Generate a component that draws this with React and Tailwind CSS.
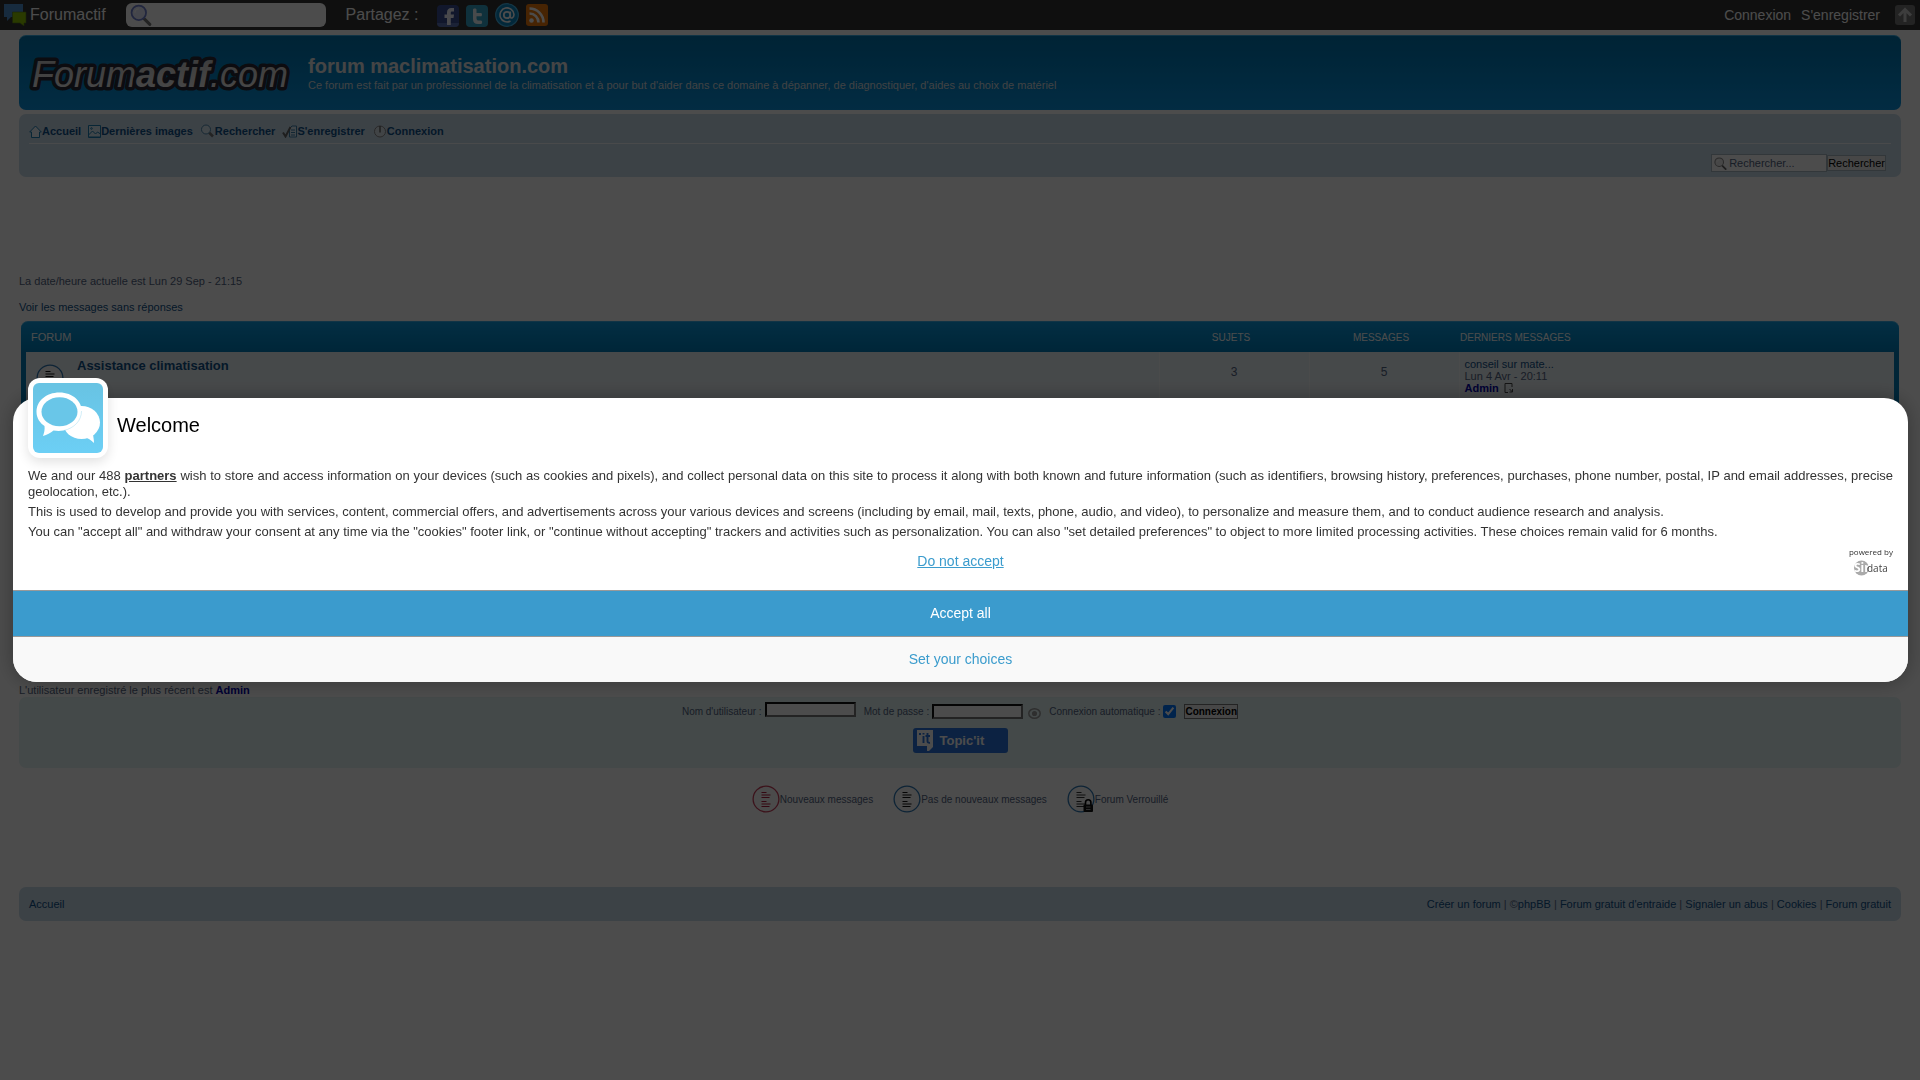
import React from "react";

function Bubbles() {
  return (
    <svg className="h-[22px] w-[23px]" viewBox="0 0 23 22" aria-hidden="true">
      <path d="M0 0h19v13H7l-4 4v-4H0z" fill="#4f8fd0" />
      <path d="M8.500 8H22v11h-2v3l-4-3H8.500z" fill="#8cc400" stroke="#54751a" strokeWidth=".6" />
    </svg>
  );
}

function Magnifier({ className, ring = "#6f7fd0", handle = "#777", fill = "#e8ecff" }) {
  return (
    <svg className={className} viewBox="0 0 20 20" aria-hidden="true">
      <path d="M13 13.500l5 5" stroke={handle} strokeWidth="2.800" strokeLinecap="round" />
      <circle cx="8" cy="8" r="6.600" fill={fill} stroke={ring} strokeWidth="1.600" />
      <path d="M4.500 8a3.500 3.500 0 0 1 3.500-3.500" stroke="#fff" strokeWidth="1.200" fill="none" />
    </svg>
  );
}

function Facebook() {
  return (
    <svg className="size-[22px]" viewBox="0 0 22 22" aria-hidden="true">
      <rect width="22" height="22" rx="4" fill="#3a4f94" />
      <path d="M0 18h22a4 4 0 0 1-4 4H4a4 4 0 0 1-4-4z" fill="#5a72b4" />
      <path d="M10 20v-7H7.500V9.500H10V7.500C10 4.500 11.700 3 14.300 3H17v3.500h-1.800c-1 0-1.400.5-1.400 1.400v1.600H17l-.5 3.500h-2.700v7z" fill="#f4f6ff" />
    </svg>
  );
}

function Twitter() {
  return (
    <svg className="size-[22px]" viewBox="0 0 22 22" aria-hidden="true">
      <rect width="22" height="22" rx="4" fill="#35a6c8" />
      <path d="M7 4.500c0-1.500 3.500-1.500 3.500 0V8H15c1.300 0 1.300 3.300 0 3.300h-4.500v1.900c0 1.800.8 2.300 2.300 2.300H15c1.500 0 1.500 3.500 0 3.500h-3c-3.400 0-5-1.800-5-5z" fill="#f2fcff" />
    </svg>
  );
}

function AtSign() {
  return (
    <svg className="size-6" viewBox="0 0 24 24" aria-hidden="true">
      <circle cx="12" cy="12" r="11.300" fill="#0785c4" stroke="#47b6e8" strokeWidth="1.200" />
      <circle cx="12" cy="12" r="3.200" fill="none" stroke="#fff" strokeWidth="1.800" />
      <path d="M15.300 8.500v5c0 2.700 3.700 1.800 3.700-2A7 7 0 1 0 15.500 18" fill="none" stroke="#fff" strokeWidth="1.600" />
    </svg>
  );
}

function Rss() {
  return (
    <svg className="size-[22px]" viewBox="0 0 22 22" aria-hidden="true">
      <rect width="22" height="22" rx="3" fill="#ee7a0c" />
      <circle cx="5.500" cy="16.500" r="2.300" fill="#fff" />
      <path d="M3.500 9.500a9 9 0 0 1 9 9M3.500 4.500a14 14 0 0 1 14 14" fill="none" stroke="#fff" strokeWidth="2.600" />
    </svg>
  );
}

function UpArrow() {
  return (
    <svg className="size-5" viewBox="0 0 20 20" aria-hidden="true">
      <rect width="20" height="20" rx="3" fill="#777" />
      <path d="M10 17V5M4 10.500l6-6 6 6" fill="none" stroke="#ccc" strokeWidth="3" />
    </svg>
  );
}

function NavIcon({ kind }) {
  if (kind === "home") {
    return (
      <svg className="h-[13px] w-[13px]" viewBox="0 0 13 13" fill="none" stroke="#1d7fb5" aria-hidden="true">
        <path d="M.7 7L6.500 1l5.800 6H10.500v5.500h-8V7z" fill="#eef5fa" />
      </svg>
    );
  }
  if (kind === "image") {
    return (
      <svg className="h-[13px] w-[13px]" viewBox="0 0 13 13" fill="none" stroke="#1d7fb5" aria-hidden="true">
        <path d="M.5.5h12v12H.5z" fill="#dbe9f3" />
        <path d="M.5 10l4-4 3 3 2-2 3 2M1 12h11" />
        <circle cx="3.500" cy="3.500" r=".8" />
      </svg>
    );
  }
  if (kind === "search") {
    return (
      <svg className="h-[14px] w-[15px]" viewBox="0 0 15 14" fill="none" stroke="#4b87ae" aria-hidden="true">
        <path d="M9 8.500l4 4" stroke="#777" strokeWidth="2.600" />
        <circle cx="6" cy="5.500" r="4.500" fill="#dbe9f3" />
      </svg>
    );
  }
  if (kind === "register") {
    return (
      <svg className="h-[14px] w-[15px]" viewBox="0 0 15 14" fill="none" stroke="#3d7fab" aria-hidden="true">
        <path d="M7.500 4.500L10 2h4.500v11h-7z" fill="#dbe9f3" />
        <path d="M9 6h4M9 8.500h4M9 11h4" />
        <path d="M1 8.500l2.500 4L8.500 3" stroke="#666" strokeWidth="2" />
      </svg>
    );
  }
  return (
    <svg className="h-[14px] w-[15px]" viewBox="0 0 15 14" fill="none" stroke="#888" aria-hidden="true">
      <circle cx="8" cy="7.500" r="5.500" fill="#dbe3e9" />
      <path d="M8 2v6.500" stroke="#666" strokeWidth="1.500" />
    </svg>
  );
}

function TopicIcon({ ring, ink, locked }) {
  return (
    <svg className="size-7 shrink-0" viewBox="0 0 28 28" aria-hidden="true">
      <circle cx="14" cy="14" r="12.900" fill="#fafafa" stroke={ring} strokeWidth="1.300" />
      <path d="M9.500 7.500h5M9.500 10h9M9.500 12.500h8M9.500 16.500h5M9.500 19h9M9.500 21.500h8" stroke={ink} strokeWidth="1.200" />
      {locked && (
        <>
          <path d="M18.500 20v-2.500a2.700 2.700 0 0 1 5.400 0V20" fill="none" stroke="#000" strokeWidth="1.600" />
          <rect x="16.500" y="19.500" width="9.500" height="7.500" rx="1" fill="#111" />
          <path d="M19 22h4.500M19 24.500h4.500" stroke="#999" strokeWidth="1" />
        </>
      )}
    </svg>
  );
}

const navItems = [
  ["home", "Accueil"],
  ["image", "Dernières images"],
  ["search", "Rechercher"],
  ["register", "S'enregistrer"],
  ["power", "Connexion"],
];

const legend = [
  { label: "Nouveaux messages", ring: "#c8405c", ink: "#b01c3c" },
  { label: "Pas de nouveaux messages", ring: "#2f78b4", ink: "#111" },
  { label: "Forum Verrouillé", ring: "#2f78b4", ink: "#333", locked: true },
];

const footerLinks = ["Créer un forum", "phpBB", "Forum gratuit d'entraide", "Signaler un abus", "Cookies", "Forum gratuit"];

function Toolbar() {
  return (
    <div className="flex h-[30px] items-center bg-[#333] pr-[5px] pl-1 text-white">
      <a href="#" className="flex items-center gap-[3px] text-base leading-[30px]">
        <Bubbles />
        Forumactif
      </a>
      <label className="ml-5 flex h-6 w-[200px] items-center rounded-md bg-white pl-1">
        <Magnifier className="size-[22px]" />
        <input type="text" aria-label="Recherche" className="w-40 bg-transparent text-sm text-black outline-none" />
      </label>
      <span className="ml-5 text-base leading-[30px]">Partagez :</span>
      <div className="ml-[18px] flex items-center gap-[7px]">
        <a href="#" aria-label="Facebook" className="pt-[2px]"><Facebook /></a>
        <a href="#" aria-label="Twitter" className="pt-[2px]"><Twitter /></a>
        <a href="#" aria-label="Email"><AtSign /></a>
        <a href="#" aria-label="RSS"><Rss /></a>
      </div>
      <div className="ml-auto flex items-center text-sm">
        <a href="#" className="mr-[10px]">Connexion</a>
        <a href="#" className="mr-[15px]">S'enregistrer</a>
        <a href="#" aria-label="Haut de page"><UpArrow /></a>
      </div>
    </div>
  );
}

function ForumTable() {
  return (
    <div className="mx-[2px] mt-[7px] h-[260px] rounded-[7px] border-t border-[#3ab0e6] bg-linear-to-b from-[#0c9be0] from-0% to-[#007dba] to-12% px-[5px] pb-[5px]">
      <table className="w-full table-fixed border-collapse">
        <colgroup>
          <col />
          <col className="w-[150px]" />
          <col className="w-[150px]" />
          <col className="w-[435px]" />
        </colgroup>
        <thead>
          <tr className="h-[30px] text-[10px] text-white">
            <th className="pl-[5px] text-left text-[11px] font-normal">FORUM</th>
            <th className="pr-[6px] text-center font-normal">SUJETS</th>
            <th className="pr-[6px] text-center font-normal">MESSAGES</th>
            <th className="pl-px text-left font-normal">DERNIERS MESSAGES</th>
          </tr>
        </thead>
        <tbody>
          <tr className="h-[60px] bg-[#ecf3f7] align-top text-[11px] leading-3">
            <td>
              <div className="flex pl-[10px]">
                <span className="mt-3"><TopicIcon ring="#2f78b4" ink="#111" /></span>
                <a href="#" className="mt-[6px] ml-[13px] text-[13px] leading-4 font-bold text-[#105289]">Assistance climatisation</a>
              </div>
            </td>
            <td className="border-l border-[#f8fafb] pt-3 text-center text-xs text-[#536482]">3</td>
            <td className="border-l border-[#f8fafb] pt-3 text-center text-xs text-[#536482]">5</td>
            <td className="border-l border-[#f8fafb] pt-[6px] pl-[5px] text-[#536482]">
              <a href="#" className="text-[#105289]">conseil sur mate...</a>
              <div>Lun 4 Avr - 20:11</div>
              <a href="#" className="inline-flex items-center gap-[5px] font-bold text-[#0000aa]">
                Admin
                <svg className="h-[10px] w-[10px]" viewBox="0 0 10 10" fill="none" stroke="#444" aria-hidden="true">
                  <path d="M4 9.500H1V.5h7V4M5.500 6l3 3M8.500 6v3h-3" />
                </svg>
              </a>
            </td>
          </tr>
          <tr className="h-[130px] bg-[#ecf3f7]"><td colSpan={4} /></tr>
        </tbody>
      </table>
    </div>
  );
}

function LoginPanel() {
  return (
    <form className="h-[71px] rounded-[7px] bg-[#e4f4f4] pt-1 text-[10px] text-[#536482]" onSubmit={(e) => e.preventDefault()}>
      <div className="flex h-5 items-center justify-center">
        <label htmlFor="user" className="mr-[3px]">Nom d'utilisateur :</label>
        <input id="user" type="text" className="mb-1 h-[15px] w-[91px] border-2 border-t-[#111] border-r-[#777] border-b-[#777] border-l-[#111] bg-white" />
        <label htmlFor="pass" className="mr-[3px] ml-2">Mot de passe :</label>
        <input id="pass" type="password" className="h-[15px] w-[91px] border-2 border-t-[#111] border-r-[#777] border-b-[#777] border-l-[#111] bg-white" />
        <svg className="mt-1 ml-[5px] h-[11px] w-[13px]" viewBox="0 0 13 11" fill="none" stroke="#999" strokeWidth="1.500" aria-hidden="true">
          <ellipse cx="6.500" cy="5.500" rx="5.700" ry="4.700" />
          <circle cx="6.500" cy="5.500" r="1.800" fill="#999" />
        </svg>
        <label htmlFor="auto" className="mr-[3px] ml-2">Connexion automatique :</label>
        <input id="auto" type="checkbox" defaultChecked className="size-[13px]" />
        <button type="submit" className="ml-2 h-[15px] border border-[#777] bg-[#efefef] font-bold text-black leading-[13px]">Connexion</button>
      </div>
      <div className="flex justify-center pt-[7px]">
        <a href="#" className="flex h-[25px] w-[95px] items-center gap-[7px] rounded-[3px] bg-[#2874dc] pl-1 text-[13px] font-bold text-white">
          <svg className="h-[21px] w-4" viewBox="0 0 16 21" aria-hidden="true">
            <path d="M0 0h16v17l-4 4h-2v-5H0z" fill="#fff" />
            <path d="M3 3v2M6.500 6v7M6.500 3v1.500M10.500 3v8c0 1.500 1 2 2.500 1.800M8.500 6H13" stroke="#2874dc" strokeWidth="1.900" fill="none" />
          </svg>
          Topic'it
        </a>
      </div>
    </form>
  );
}

function SirdataLogo() {
  return (
    <svg className="mx-auto mt-[3px] h-[16px] w-9" viewBox="0 0 36 16" aria-hidden="true">
      <circle cx="8.500" cy="8" r="7.500" fill="#aaa" />
      <text x="1" y="12" fontSize="12" fontWeight="bold" fill="#fff" fontFamily="Open Sans, sans-serif">Sir</text>
      <text x="14" y="12" fontSize="10" fill="#444" fontFamily="Open Sans, sans-serif">data</text>
    </svg>
  );
}

function ConsentDialog() {
  return (
    <div className="fixed inset-0 flex items-center bg-black/70 pr-3 pl-[13px]">
      <div role="dialog" aria-labelledby="welcome" className="w-full rounded-3xl bg-white text-[13px] leading-4 text-[#333] shadow-[0_0_20px_rgba(0,0,0,0.3)]">
        <div className="px-[15px]">
          <div className="flex items-start">
            <div className="-mt-5 size-20 rounded-xl bg-white p-[5px] shadow-[0_4px_12px_rgba(0,0,0,0.12)]">
              <svg className="size-[70px] rounded-md bg-linear-to-b from-[#68c3e3] to-[#6ccff5]" viewBox="0 0 70 70" aria-hidden="true">
                <ellipse cx="48.500" cy="39.500" rx="18.500" ry="16.500" fill="#fff" />
                <path d="M51 54c4 1 7 3 10 6 0-4-1-7-1-10z" fill="#fff" />
                <path d="M26.500 9.500C13 9.500 3.500 18 3.500 29c0 6 3.500 11 8 14 .5 4-.5 7-1.500 10 4-1 7.500-3 10.500-5.500C36 50 49 41 49 29c0-10.500-9-19.500-22.500-19.500z" fill="#fff" />
                <path d="M31 47.500C41 45 48.500 38 48.500 28" stroke="#69c6e8" strokeWidth="1" fill="none" opacity=".3" />
                <ellipse cx="26.500" cy="28.700" rx="18" ry="14.500" fill="#69c6e8" />
              </svg>
            </div>
            <h2 id="welcome" className="mt-[15px] ml-[9px] text-xl leading-6 text-black">Welcome</h2>
          </div>
          <div className="mt-[10px] flex flex-col gap-1">
            <p className="text-justify">
              We and our 488 <a href="#" className="font-bold underline">partners</a> wish to store and access information on your devices (such as cookies and pixels), and collect personal data on this site to process it along with both known and future information (such as identifiers, browsing history, preferences, purchases, phone number, postal, IP and email addresses, precise geolocation, etc.).
            </p>
            <p>This is used to develop and provide you with services, content, commercial offers, and advertisements across your various devices and screens (including by email, mail, texts, phone, audio, and video), to personalize and measure them, and to conduct audience research and analysis.</p>
            <p>You can "accept all" and withdraw your consent at any time via the "cookies" footer link, or "continue without accepting" trackers and activities such as personalization. You can also "set detailed preferences" to object to more limited processing activities. These choices remain valid for 6 months.</p>
          </div>
          <div className="grid h-[50px] grid-cols-[1fr_auto_1fr] items-start pt-[7px]">
            <button type="button" className="col-start-2 pt-1 text-sm text-[#3b9ccd] underline">Do not accept</button>
            <a href="#" className="justify-self-end text-center font-['Open_Sans',sans-serif] text-[8px] leading-[10px]">
              powered by
              <SirdataLogo />
            </a>
          </div>
        </div>
        <button type="button" className="block h-[46px] w-full border-t border-[#999] bg-[#3b9bcd] pb-[2px] text-sm text-white">Accept all</button>
        <button type="button" className="block h-[46px] w-full rounded-b-3xl border-t border-[#999] bg-[#f9f9f9] pb-[2px] text-sm text-[#3b9ccd]">Set your choices</button>
      </div>
    </div>
  );
}

export default function App() {
  return (
    <div className="min-h-screen bg-white font-['Liberation_Sans',Arial,sans-serif] text-[11px] leading-[13px] text-[#536482]">
      <Toolbar />
      <div className="px-[19px] pt-[5px]">
        <header className="flex h-[75px] items-center rounded-[7px] border-t border-[#3ab0e6] bg-linear-to-b from-[#0076b1] to-[#0a93df] text-white">
          <a href="#" aria-label="Forumactif.com" className="ml-[10px] block">
            <svg className="h-[50px] w-[264px]" viewBox="0 0 264 50" aria-hidden="true">
              <defs>
                <linearGradient id="logoFill" x1="0" y1="0" x2="0" y2="1">
                  <stop offset="0" stopColor="#c4c4c4" />
                  <stop offset="1" stopColor="#f4f4f4" />
                </linearGradient>
              </defs>
              <text x="3" y="39" fontSize="36" fontStyle="italic" fontFamily="Liberation Sans, Arial, sans-serif" fill="url(#logoFill)" stroke="#2a2a38" strokeWidth="7" strokeLinejoin="round" paintOrder="stroke">
                Forum<tspan fontWeight="bold">actif</tspan>.com
              </text>
            </svg>
          </a>
          <div className="ml-[15px]">
            <h1 className="text-xl leading-6 font-bold text-[#e8e8e8]">forum maclimatisation.com</h1>
            <p className="leading-[15px] text-[#d8dde0]">Ce forum est fait par un professionnel de la climatisation et à pour but d'aider dans ce domaine à dépanner, de diagnostiquer, d'aides au choix de matériel</p>
          </div>
        </header>

        <nav className="mt-1 h-[63px] rounded-[7px] bg-[#cadceb] px-[10px]">
          <ul className="flex h-[30px] items-center gap-[7px] border-b border-white/80 pt-[5px] font-bold text-[#105289]">
            {navItems.map(([kind, label]) => (
              <li key={label}>
                <a href="#" className="flex items-center"><NavIcon kind={kind} />{label}</a>
              </li>
            ))}
          </ul>
          <form className="mr-[5px] flex items-center justify-end pt-[10px]" onSubmit={(e) => e.preventDefault()}>
            <label className="flex h-[18px] w-[116px] items-center gap-[2px] border border-[#a9b8c2] bg-white pl-[2px]">
              <Magnifier className="size-[13px] shrink-0" ring="#888" handle="#666" fill="#eee" />
              <input type="text" aria-label="Rechercher" placeholder="Rechercher..." className="min-w-0 flex-1 outline-none placeholder:text-[#536482]" />
            </label>
            <button type="submit" className="h-4 border border-[#a9b8c2] bg-[#efefef] text-black leading-[14px]">Rechercher</button>
          </form>
        </nav>

        <p className="mt-[98px]">La date/heure actuelle est Lun 29 Sep - 21:15</p>
        <p className="mt-[13px]"><a href="#" className="text-[#105289]">Voir les messages sans réponses</a></p>

        <ForumTable />

        <p className="mt-[103px]">
          L'utilisateur enregistré le plus récent est <a href="#" className="font-bold text-[#0000aa]">Admin</a>
        </p>
        <LoginPanel />

        <ul className="mt-[17px] flex justify-center gap-5 text-[10px]">
          {legend.map((item) => (
            <li key={item.label} className="flex items-center">
              <TopicIcon ring={item.ring} ink={item.ink} locked={item.locked} />
              {item.label}
            </li>
          ))}
        </ul>

        <footer className="mt-[74px] flex h-[34px] items-center justify-between rounded-[7px] bg-[#cadceb] px-[10px]">
          <a href="#" className="text-[#105289]">Accueil</a>
          <p>
            {footerLinks.map((label, i) => (
              <React.Fragment key={label}>
                {i > 0 && " | "}
                {label === "phpBB" && "©"}
                <a href="#" className="text-[#105289]">{label}</a>
              </React.Fragment>
            ))}
          </p>
        </footer>
      </div>
      <ConsentDialog />
    </div>
  );
}
